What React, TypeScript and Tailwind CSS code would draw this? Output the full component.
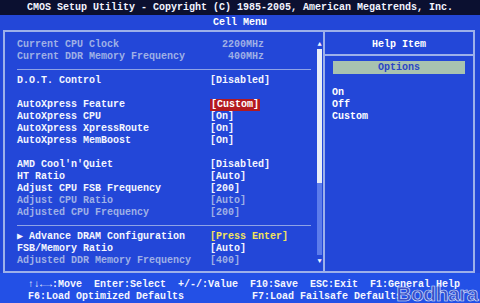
import React from "react";

type Row =
  | { kind: "item"; label: string; value: string; dim?: boolean; tone?: "red" | "yellow" }
  | { kind: "sep" }
  | { kind: "blank" };

const rows: Row[] = [
  { kind: "item", label: "Current CPU Clock", value: "  2200MHz", dim: true },
  { kind: "item", label: "Current DDR Memory Frequency", value: "   400MHz", dim: true },
  { kind: "sep" },
  { kind: "item", label: "D.O.T. Control", value: "[Disabled]" },
  { kind: "blank" },
  { kind: "item", label: "AutoXpress Feature", value: "[Custom]", tone: "red" },
  { kind: "item", label: "AutoXpress CPU", value: "[On]" },
  { kind: "item", label: "AutoXpress XpressRoute", value: "[On]" },
  { kind: "item", label: "AutoXpress MemBoost", value: "[On]" },
  { kind: "blank" },
  { kind: "item", label: "AMD Cool'n'Quiet", value: "[Disabled]" },
  { kind: "item", label: "HT Ratio", value: "[Auto]" },
  { kind: "item", label: "Adjust CPU FSB Frequency", value: "[200]" },
  { kind: "item", label: "Adjust CPU Ratio", value: "[Auto]", dim: true },
  { kind: "item", label: "Adjusted CPU Frequency", value: "[200]", dim: true },
  { kind: "sep" },
  { kind: "item", label: "\u25B6 Advance DRAM Configuration", value: "[Press Enter]", tone: "yellow" },
  { kind: "item", label: "FSB/Memory Ratio", value: "[Auto]" },
  { kind: "item", label: "Adjusted DDR Memory Frequency", value: "[400]", dim: true },
];

const SetupRow = ({ row }: { row: Row }) => {
  if (row.kind === "sep") {
    return (
      <div className="h-3 flex items-center">
        <div className="h-px w-[294px] bg-[#8ea3e6]" />
      </div>
    );
  }
  if (row.kind === "blank") return <div className="h-3" />;
  const color = row.dim ? "text-[#9fb0e6]" : "text-[#f4f6ff]";
  return (
    <div className={`h-3 flex items-center whitespace-pre ${color}`}>
      <span className="w-[193px] shrink-0">{row.label}</span>
      {row.tone === "red" ? (
        <span className="bg-[#b3191f] text-white px-px">{row.value}</span>
      ) : row.tone === "yellow" ? (
        <span className="text-[#f2e35c]">{row.value}</span>
      ) : (
        <span>{row.value}</span>
      )}
    </div>
  );
};

export default function App() {
  return (
    <div
      className="relative w-[480px] h-[303px] overflow-hidden bg-[#2347d8] text-[10px] leading-3 font-bold text-white"
      style={{ fontFamily: '"Liberation Mono", "DejaVu Sans Mono", monospace' }}
    >
      <div className="h-[15px] bg-[#0b1030] flex items-center justify-center whitespace-pre text-[#f2f4ff]">
        CMOS Setup Utility - Copyright (C) 1985-2005, American Megatrends, Inc.
      </div>
      <div className="h-[15px] flex items-center justify-center">Cell Menu</div>

      <div className="ml-[3px] w-[472px] h-[243px] border-2 border-[#9db0ea] flex">
        {/* left panel */}
        <div className="w-[320px] border-r-2 border-[#9db0ea] flex">
          <div className="w-[311px] pl-3 pt-[7px]">
            {rows.map((r, i) => (
              <SetupRow key={i} row={r} />
            ))}
          </div>
          <div className="w-[7px] pt-[9px] flex flex-col items-center">
            <span className="text-[7px] leading-[7px] text-[#f4f6ff]">▲</span>
            <div className="mt-px w-[5px] h-[134px] bg-[#e9eef8]" />
            <div className="w-[5px] h-[72px] bg-[#5c7ceb]" />
            <span className="mt-[3px] text-[7px] leading-[7px] text-[#f4f6ff]">▼</span>
          </div>
        </div>

        {/* help panel */}
        <div className="flex-1 flex flex-col">
          <div className="h-[24px] pt-[3px] border-b-2 border-[#9db0ea] flex items-center justify-center">
            Help Item
          </div>
          <div className="mt-[5px] mx-[8px] h-[13px] pt-px bg-[#a8c3b0] text-[#2a45c6] flex items-center justify-center">
            Options
          </div>
          <div className="mt-[13px] pl-[7px] flex flex-col">
            <span className="h-3">On</span>
            <span className="h-3">Off</span>
            <span className="h-3">Custom</span>
          </div>
        </div>
      </div>

      <div className="bg-[#2350e6] h-[30px] pl-[28px] pt-[6px] whitespace-pre text-[#f4f6ff]">
        <div className="h-3">
          {"↑↓←→:Move  Enter:Select  +/-/:Value  F10:Save  ESC:Exit  F1:General Help"}
        </div>
        <div className="h-3 flex">
          <span className="w-[224px]">F6:Load Optimized Defaults</span>
          <span>F7:Load Failsafe Defaults</span>
        </div>
      </div>

      <div
        className="absolute right-[2px] bottom-[-2px] text-[21px] leading-[22px] font-black tracking-[-0.5px] text-[#3a4fc4]"
        style={{
          fontFamily: '"Liberation Sans", Arial, sans-serif',
          WebkitTextStroke: "0.6px #dfe6ff",
        }}
      >
        Bodhara
      </div>
    </div>
  );
}
